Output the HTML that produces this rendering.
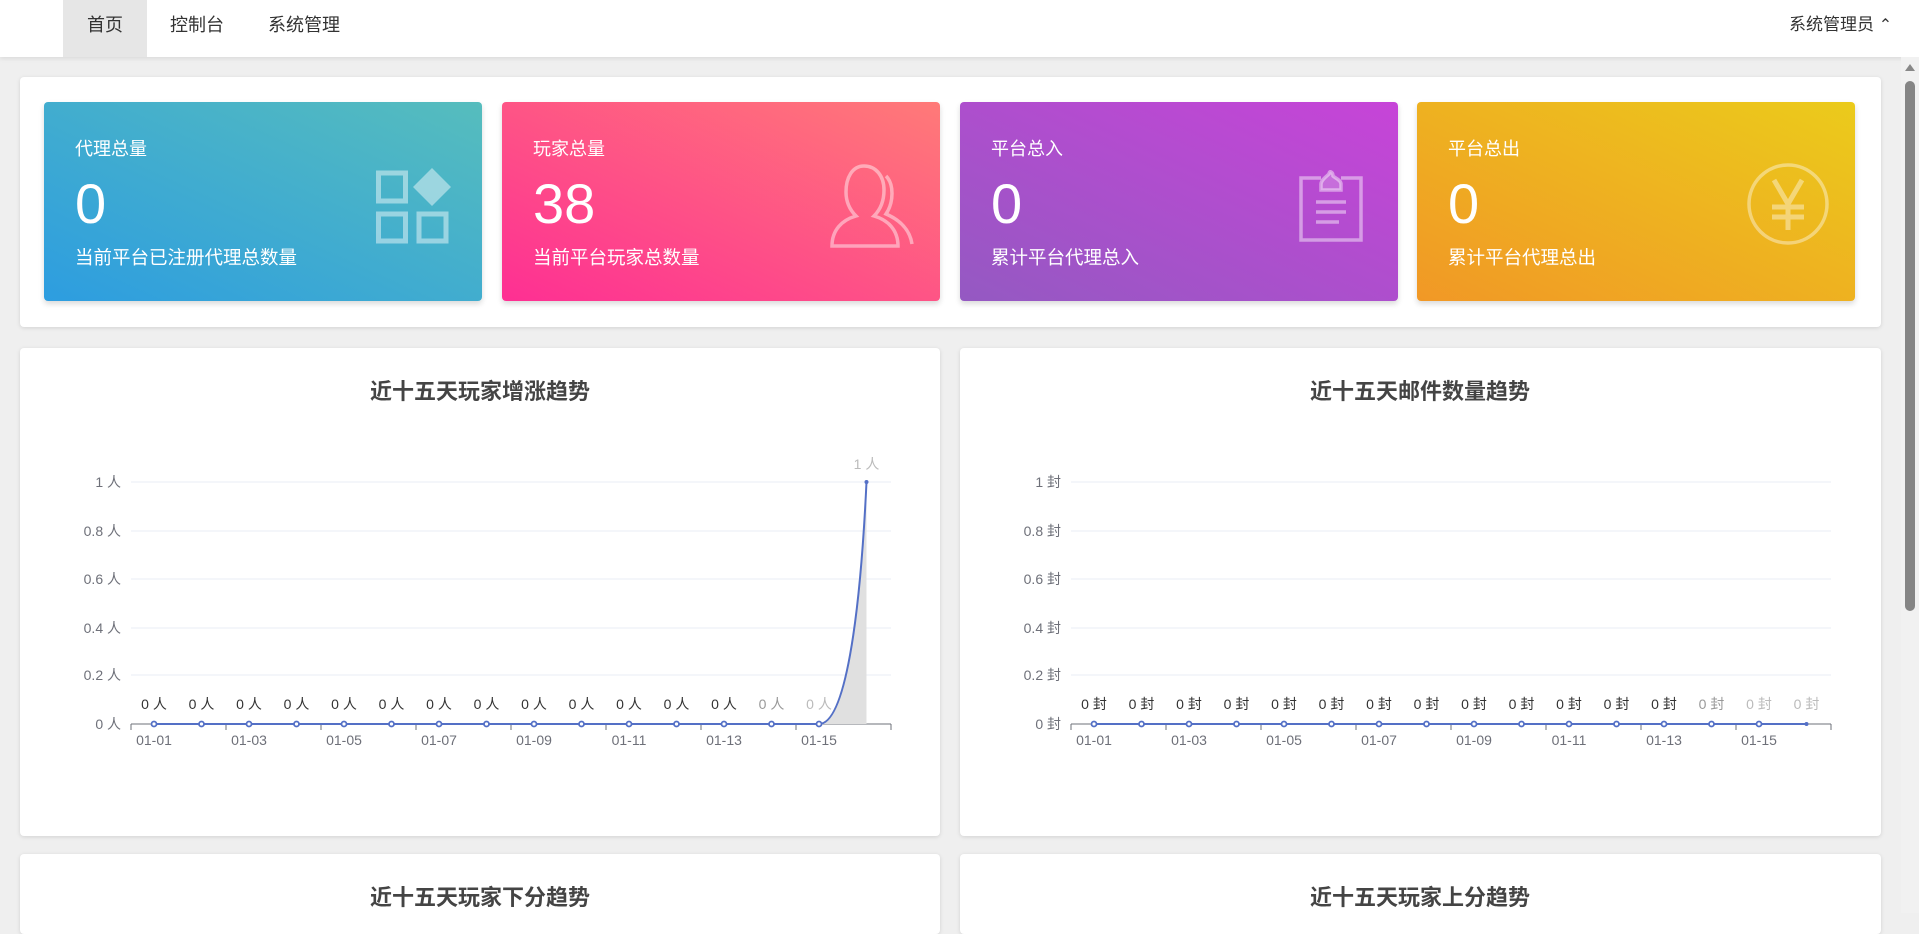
<!DOCTYPE html>
<html><head><meta charset="utf-8"><style>
*{margin:0;padding:0;box-sizing:border-box}
body{width:1919px;height:913px;overflow:hidden;background:#efefef;font-family:"Liberation Sans","Noto Sans CJK SC",sans-serif;position:relative}
.nav{position:absolute;left:0;top:0;width:1919px;height:57px;background:#fff;box-shadow:0 2px 4px rgba(0,0,0,.08)}
.tab{position:absolute;top:0;height:57px;line-height:50px;font-size:18px;color:#333}
.panel{position:absolute;background:#fff;border-radius:4px;box-shadow:0 1px 4px rgba(0,0,0,.12)}
.card{position:absolute;top:102px;width:438px;height:199px;border-radius:4px;color:#fff;box-shadow:0 3px 6px rgba(0,0,0,.15)}
.card .t{position:absolute;left:31px;top:33px;font-size:18px}
.card .n{position:absolute;left:31px;top:70px;font-size:56px;line-height:64px}
.card .s{position:absolute;left:31px;top:142px;font-size:18.5px}
.card svg{position:absolute}
.ct{position:absolute;font-size:22px;font-weight:bold;color:#444;text-align:center;width:920px}
</style></head><body>
<div class="nav">
<div class="tab" style="left:63px;width:84px;background:#e6e6e6;text-align:center">首页</div>
<div class="tab" style="left:170px">控制台</div>
<div class="tab" style="left:268px">系统管理</div>
<div class="tab" style="left:1789px;font-size:17px">系统管理员 <span style="font-size:16px">&#8963;</span></div>
</div>
<div style="position:absolute;left:1901px;top:57px;width:18px;height:856px;background:#f1f1f1"></div>
<div style="position:absolute;left:1905px;top:64px;width:0;height:0;border-left:5px solid transparent;border-right:5px solid transparent;border-bottom:7px solid #888"></div>
<div style="position:absolute;left:1905px;top:81px;width:10px;height:530px;background:#858585;border-radius:5px"></div>

<div class="panel" style="left:20px;top:77px;width:1861px;height:250px"></div>
<div class="card" style="left:44px;background:linear-gradient(to top right,#2d9de0,#56bdbd)">
<div class="t">代理总量</div><div class="n">0</div><div class="s">当前平台已注册代理总数量</div>
<svg style="left:332px;top:66px" width="76" height="76" viewBox="0 0 76 76" fill="none" stroke="rgba(255,255,255,.45)" stroke-width="5">
<rect x="2.5" y="5" width="27" height="28"/><path d="M56 0 L75 19 L56 38 L37 19Z" fill="rgba(255,255,255,.45)" stroke="none"/>
<rect x="2.5" y="46" width="27" height="27"/><rect x="43" y="46" width="27" height="27"/></svg>
</div>
<div class="card" style="left:502px;background:linear-gradient(to top right,#fe2f93,#ff7a78)">
<div class="t">玩家总量</div><div class="n">38</div><div class="s">当前平台玩家总数量</div>
<svg style="left:328px;top:62px" width="86" height="84" viewBox="0 0 86 84" fill="none" stroke="rgba(255,255,255,.45)" stroke-width="3.5">
<path d="M34 2 C22 2 16 14 16 28 C16 40 22 48 26 52 C12 56 2 66 2 82 L68 82 C68 66 58 56 44 52 C50 46 54 38 54 26 C54 12 46 2 34 2Z"/>
<path d="M56 12 C64 20 64 38 56 50 C70 56 80 66 82 80"/></svg>
</div>
<div class="card" style="left:960px;background:linear-gradient(to top right,#9459c2,#c744d8)">
<div class="t">平台总入</div><div class="n">0</div><div class="s">累计平台代理总入</div>
<svg style="left:339px;top:68px" width="64" height="72" viewBox="0 0 64 72" fill="none" stroke="rgba(255,255,255,.45)" stroke-width="3.5">
<path d="M22 8 L2 8 L2 70 L62 70 L62 8 L42 8"/><path d="M22 20 L42 20 L42 14 C42 10 36 8 34 6 C34 2 30 0 30 4 C28 6 22 10 22 14Z" fill="rgba(255,255,255,.2)"/>
<path d="M17 32 L47 32 M17 42 L47 42 M17 52 L40 52"/></svg>
</div>
<div class="card" style="left:1417px;background:linear-gradient(to top right,#f19826,#ebcb1b)">
<div class="t">平台总出</div><div class="n">0</div><div class="s">累计平台代理总出</div>
<svg style="left:329px;top:60px" width="84" height="84" viewBox="0 0 84 84" fill="none" stroke="rgba(255,255,255,.4)" stroke-width="3.5">
<ellipse cx="42" cy="42" rx="39" ry="39"/><path d="M28 18 L42 42 L56 18 M42 42 L42 68 M26 45 L58 45 M26 55 L58 55" stroke-width="5"/></svg>
</div>

<div class="panel" style="left:20px;top:348px;width:920px;height:488px"></div>
<div class="panel" style="left:960px;top:348px;width:921px;height:488px"></div>
<div class="panel" style="left:20px;top:854px;width:920px;height:80px"></div>
<div class="panel" style="left:960px;top:854px;width:921px;height:80px"></div>
<div class="ct" style="left:20px;top:374px">近十五天玩家增涨趋势</div>
<div class="ct" style="left:960px;top:374px">近十五天邮件数量趋势</div>
<div class="ct" style="left:20px;top:880px">近十五天玩家下分趋势</div>
<div class="ct" style="left:960px;top:880px">近十五天玩家上分趋势</div>

<svg style="position:absolute;left:0;top:0" width="1919" height="913" font-family="Liberation Sans,Noto Sans CJK SC,sans-serif" font-size="14">
<defs><circle id="p" r="2.5" fill="#fff" stroke="#5470c6" stroke-width="1.8"/></defs>
<g id="L">
<g stroke="#e8ecf4" stroke-width="1"><path d="M131 482H891M131 531H891M131 579H891M131 628H891M131 675H891"/></g>
<path d="M131 724H891" stroke="#6e7079"/>
<path d="M131 724v6M226 724v6M321 724v6M416 724v6M511 724v6M606 724v6M701 724v6M796 724v6M891 724v6" stroke="#6e7079"/>
<g fill="#6e7079" text-anchor="middle"><text x="154" y="745">01-01</text><text x="249" y="745">01-03</text><text x="344" y="745">01-05</text><text x="439" y="745">01-07</text><text x="534" y="745">01-09</text><text x="629" y="745">01-11</text><text x="724" y="745">01-13</text><text x="819" y="745">01-15</text></g>
</g>
<use href="#L" x="940"/>
<g fill="#6e7079" text-anchor="end"><text x="121" y="487">1 人</text><text x="121" y="536">0.8 人</text><text x="121" y="584">0.6 人</text><text x="121" y="633">0.4 人</text><text x="121" y="680">0.2 人</text><text x="121" y="729">0 人</text>
<text x="1061" y="487">1 封</text><text x="1061" y="536">0.8 封</text><text x="1061" y="584">0.6 封</text><text x="1061" y="633">0.4 封</text><text x="1061" y="680">0.2 封</text><text x="1061" y="729">0 封</text></g>
<path d="M819 724 C845 724 860 620 866.5 482 L866.5 724Z" fill="#e0e0e0"/>
<path d="M154 724H819 C845 724 860 620 866.5 482" fill="none" stroke="#5470c6" stroke-width="2"/>
<path d="M1094 724H1806.5" fill="none" stroke="#5470c6" stroke-width="2"/>
<g id="P"><use href="#p" x="154" y="724"/><use href="#p" x="201.5" y="724"/><use href="#p" x="249" y="724"/><use href="#p" x="296.5" y="724"/><use href="#p" x="344" y="724"/><use href="#p" x="391.5" y="724"/><use href="#p" x="439" y="724"/><use href="#p" x="486.5" y="724"/><use href="#p" x="534" y="724"/><use href="#p" x="581.5" y="724"/><use href="#p" x="629" y="724"/><use href="#p" x="676.5" y="724"/><use href="#p" x="724" y="724"/><use href="#p" x="771.5" y="724"/><use href="#p" x="819" y="724"/></g>
<use href="#P" x="940"/>
<circle cx="866.5" cy="482" r="2" fill="#5470c6"/><circle cx="1806.5" cy="724" r="2" fill="#5470c6"/>
<g fill="#333" text-anchor="middle"><text x="154" y="709">0 人</text><text x="201.5" y="709">0 人</text><text x="249" y="709">0 人</text><text x="296.5" y="709">0 人</text><text x="344" y="709">0 人</text><text x="391.5" y="709">0 人</text><text x="439" y="709">0 人</text><text x="486.5" y="709">0 人</text><text x="534" y="709">0 人</text><text x="581.5" y="709">0 人</text><text x="629" y="709">0 人</text><text x="676.5" y="709">0 人</text><text x="724" y="709">0 人</text><text x="771.5" y="709" fill="#999">0 人</text><text x="819" y="709" fill="#bbb">0 人</text><text x="866.5" y="469" fill="#bbb">1 人</text>
<text x="1094" y="709">0 封</text><text x="1141.5" y="709">0 封</text><text x="1189" y="709">0 封</text><text x="1236.5" y="709">0 封</text><text x="1284" y="709">0 封</text><text x="1331.5" y="709">0 封</text><text x="1379" y="709">0 封</text><text x="1426.5" y="709">0 封</text><text x="1474" y="709">0 封</text><text x="1521.5" y="709">0 封</text><text x="1569" y="709">0 封</text><text x="1616.5" y="709">0 封</text><text x="1664" y="709">0 封</text><text x="1711.5" y="709" fill="#999">0 封</text><text x="1759" y="709" fill="#bbb">0 封</text><text x="1806.5" y="709" fill="#bbb">0 封</text></g>
</svg>
</body></html>
